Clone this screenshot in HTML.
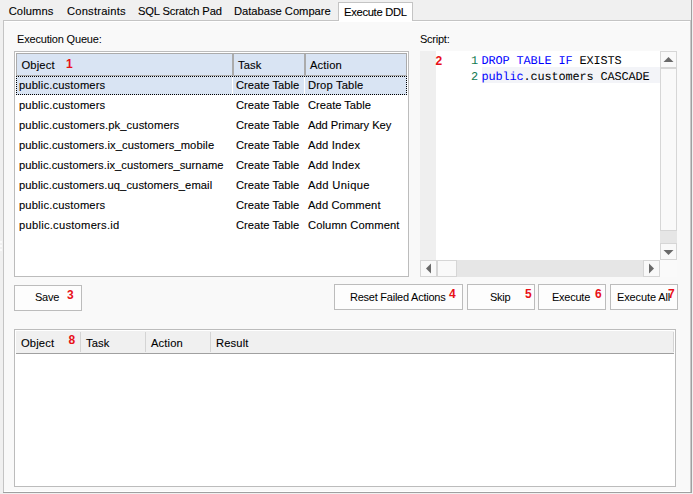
<!DOCTYPE html>
<html><head><meta charset="utf-8">
<style>
html,body{margin:0;padding:0}
body{width:693px;height:494px;background:#f0f0f0;position:relative;overflow:hidden;font-family:"Liberation Sans",sans-serif;color:#000}
div,span{position:absolute;box-sizing:border-box}
.t{white-space:nowrap;font-size:11.2px;line-height:12px;letter-spacing:0.15px;-webkit-text-stroke:0.1px #000}
.m{white-space:nowrap;font-size:11px;line-height:12px;letter-spacing:-0.24px}
.r{white-space:nowrap;font-size:12px;line-height:12px;font-weight:bold;color:#e81018}
.c{white-space:nowrap;font-family:"Liberation Mono",monospace;font-size:11.9px;line-height:16px;letter-spacing:-0.14px;text-rendering:geometricPrecision}
.hl{background:#fff}
</style></head><body>

<!-- grip -->
<div style="left:0;top:241px;width:2px;height:2px;background:#fbfbfb"></div>
<div style="left:0;top:245px;width:2px;height:2px;background:#fbfbfb"></div>
<div style="left:0;top:249px;width:2px;height:2px;background:#fbfbfb"></div>
<!-- tabs -->
<div class="t" style="left:8.7px;top:5px;letter-spacing:0.1px">Columns</div>
<div class="t" style="left:67px;top:5px;letter-spacing:0.2px">Constraints</div>
<div class="t" style="left:138px;top:5px;letter-spacing:-0.15px">SQL Scratch Pad</div>
<div class="t" style="left:234px;top:5px;letter-spacing:-0.02px">Database Compare</div>

<!-- panel -->
<div style="left:3px;top:20px;width:689px;height:473px;background:#f9f9f9;border-left:1px solid #c4c4c4;border-top:1px solid #c4c4c4"></div>
<div style="left:4px;top:21px;width:686px;height:1px;background:#fff"></div>
<div style="left:690px;top:21px;width:1px;height:471px;background:#c8c8c8"></div>
<div style="left:691px;top:0px;width:1px;height:493px;background:#a0a0a0"></div>
<div style="left:4px;top:491px;width:686px;height:1px;background:#fff"></div>
<div style="left:3px;top:492px;width:689px;height:1px;background:#a0a0a0"></div>

<!-- active tab -->
<div style="left:338px;top:2px;width:75px;height:19px;background:#fff;border:1px solid #c4c4c4;border-bottom:none"></div>
<div class="t" style="left:344px;top:6px;letter-spacing:-0.3px">Execute DDL</div>

<!-- labels -->
<div class="m" style="left:17px;top:32.5px;letter-spacing:-0.18px">Execution Queue:</div>
<div class="m" style="left:420px;top:32.5px">Script:</div>

<!-- top grid -->
<div style="left:14px;top:51px;width:395px;height:226px;background:#fff;border:1px solid #bcbcbc"></div>
<div style="left:16px;top:53px;width:391px;height:23px;background:#d9e4f3;border:1px solid #ababab"></div>
<div style="left:232px;top:54px;width:2px;height:21px;background:#ababab"></div>
<div style="left:304px;top:54px;width:2px;height:21px;background:#ababab"></div>
<div class="t" style="left:21.5px;top:59px">Object</div>
<div class="r" style="left:66px;top:58.3px">1</div>
<div class="t" style="left:238px;top:59px">Task</div>
<div class="t" style="left:310px;top:59px">Action</div>

<!-- selected row -->
<div style="left:16px;top:76px;width:391px;height:19px;background:#d9e4f3;border:1px dotted #000"></div>
<div style="left:232px;top:77px;width:1px;height:17px;background:#fff"></div>
<div style="left:304px;top:77px;width:1px;height:17px;background:#fff"></div>

<div class="t" style="left:19px;top:79px">public.customers</div>
<div class="t" style="letter-spacing:0;left:236px;top:79px">Create Table</div>
<div class="t" style="left:308px;top:79px">Drop Table</div>

<div class="t" style="left:19px;top:99px">public.customers</div>
<div class="t" style="letter-spacing:0;left:236px;top:99px">Create Table</div>
<div class="t" style="left:308px;top:99px;letter-spacing:-0.03px">Create Table</div>

<div class="t" style="left:19px;top:119px;letter-spacing:0.125px">public.customers.pk_customers</div>
<div class="t" style="letter-spacing:0;left:236px;top:119px">Create Table</div>
<div class="t" style="left:308px;top:119px;letter-spacing:-0.04px">Add Primary Key</div>

<div class="t" style="left:19px;top:139px;letter-spacing:0.085px">public.customers.ix_customers_mobile</div>
<div class="t" style="letter-spacing:0;left:236px;top:139px">Create Table</div>
<div class="t" style="left:308px;top:139px;letter-spacing:0.2px">Add Index</div>

<div class="t" style="left:19px;top:159px;letter-spacing:0.05px">public.customers.ix_customers_surname</div>
<div class="t" style="letter-spacing:0;left:236px;top:159px">Create Table</div>
<div class="t" style="left:308px;top:159px;letter-spacing:0.2px">Add Index</div>

<div class="t" style="left:19px;top:179px;letter-spacing:0.085px">public.customers.uq_customers_email</div>
<div class="t" style="letter-spacing:0;left:236px;top:179px">Create Table</div>
<div class="t" style="left:308px;top:179px;letter-spacing:0.34px">Add Unique</div>

<div class="t" style="left:19px;top:199px">public.customers</div>
<div class="t" style="letter-spacing:0;left:236px;top:199px">Create Table</div>
<div class="t" style="left:308px;top:199px;letter-spacing:0.1px">Add Comment</div>

<div class="t" style="left:19px;top:219px;letter-spacing:0.25px">public.customers.id</div>
<div class="t" style="letter-spacing:0;left:236px;top:219px">Create Table</div>
<div class="t" style="left:308px;top:219px;letter-spacing:0.1px">Column Comment</div>

<!-- editor -->
<div style="left:420px;top:51px;width:256px;height:225px;background:#fff"></div>
<div style="left:420px;top:51px;width:16px;height:209px;background:#efefef"></div>
<div style="left:482px;top:67px;width:178px;height:16px;background:#f3f4f8"></div>
<div class="c" style="left:471px;top:53px;color:#137a52">1</div>
<div class="c" style="left:471px;top:69px;color:#137a52">2</div>
<div class="c" style="left:481.5px;top:53px"><span style="position:static;color:#0000ff">DROP TABLE IF</span> EXISTS</div>
<div class="c" style="left:481.5px;top:69px"><span style="position:static;color:#0000ff">public</span>.customers CASCADE</div>
<div class="r" style="left:435.5px;top:55px">2</div>

<!-- vertical scrollbar -->
<div style="left:660px;top:51px;width:17px;height:209px;background:#e6e6e6"></div>
<div style="left:660px;top:51px;width:17px;height:17px;background:#f9f9f9;border:1px solid #d6d6d6"></div>
<div style="left:660px;top:68px;width:17px;height:163px;background:#f9f9f9;border:1px solid #d6d6d6"></div>
<div style="left:660px;top:243px;width:17px;height:17px;background:#f9f9f9;border:1px solid #d6d6d6"></div>
<svg style="position:absolute;left:663px;top:56px" width="11" height="7"><polygon points="0.5,6 5.5,1 10.5,6" fill="#6a6a6a"/></svg>
<svg style="position:absolute;left:663px;top:249px" width="11" height="7"><polygon points="0.5,1 5.5,6 10.5,1" fill="#6a6a6a"/></svg>

<!-- horizontal scrollbar -->
<div style="left:420px;top:260px;width:240px;height:17px;background:#e6e6e6"></div>
<div style="left:420px;top:260px;width:17px;height:17px;background:#f9f9f9;border:1px solid #d6d6d6"></div>
<div style="left:437px;top:260px;width:20px;height:17px;background:#f9f9f9;border:1px solid #d6d6d6"></div>
<div style="left:643px;top:260px;width:17px;height:17px;background:#f9f9f9;border:1px solid #d6d6d6"></div>
<div style="left:660px;top:260px;width:17px;height:17px;background:#fafafa"></div>
<svg style="position:absolute;left:425px;top:263px" width="7" height="11"><polygon points="6,0.5 1,5.5 6,10.5" fill="#6a6a6a"/></svg>
<svg style="position:absolute;left:648px;top:263px" width="7" height="11"><polygon points="1,0.5 6,5.5 1,10.5" fill="#6a6a6a"/></svg>

<!-- buttons -->
<div style="left:14px;top:285px;width:68px;height:26px;background:#fdfdfd;border:1px solid #bcbcbc"></div>
<div class="m" style="left:35px;top:291px">Save</div>
<div class="r" style="left:67px;top:288.7px">3</div>

<div style="left:334px;top:284px;width:129px;height:26px;background:#fdfdfd;border:1px solid #bcbcbc"></div>
<div class="m" style="left:350px;top:291px">Reset Failed Actions</div>
<div class="r" style="left:449px;top:288px">4</div>

<div style="left:467px;top:284px;width:68px;height:26px;background:#fdfdfd;border:1px solid #bcbcbc"></div>
<div class="m" style="left:490px;top:291px">Skip</div>
<div class="r" style="left:525px;top:288px">5</div>

<div style="left:538px;top:284px;width:68px;height:26px;background:#fdfdfd;border:1px solid #bcbcbc"></div>
<div class="m" style="left:552px;top:291px">Execute</div>
<div class="r" style="left:595px;top:288px">6</div>

<div style="left:610px;top:284px;width:68px;height:26px;background:#fdfdfd;border:1px solid #bcbcbc"></div>
<div class="m" style="left:617px;top:291px;letter-spacing:-0.12px">Execute All</div>
<div class="r" style="left:668px;top:288px">7</div>

<!-- bottom grid -->
<div style="left:14px;top:329px;width:662px;height:158px;background:#fff;border:1px solid #bcbcbc"></div>
<div style="left:16px;top:331px;width:658px;height:23px;background:#f0f0f0;border-bottom:1px solid #a0a0a0"></div>
<div style="left:80px;top:332px;width:1px;height:20px;background:#d4d4d4"></div>
<div style="left:145px;top:332px;width:1px;height:20px;background:#d4d4d4"></div>
<div style="left:210px;top:332px;width:1px;height:20px;background:#d4d4d4"></div>
<div style="left:673px;top:332px;width:1px;height:20px;background:#d4d4d4"></div>
<div class="t" style="left:21px;top:337px;letter-spacing:0.15px">Object</div>
<div class="r" style="left:68.5px;top:334.3px">8</div>
<div class="t" style="left:86px;top:337px">Task</div>
<div class="t" style="left:151px;top:337px;letter-spacing:0.15px">Action</div>
<div class="t" style="left:216px;top:337px">Result</div>

</body></html>
